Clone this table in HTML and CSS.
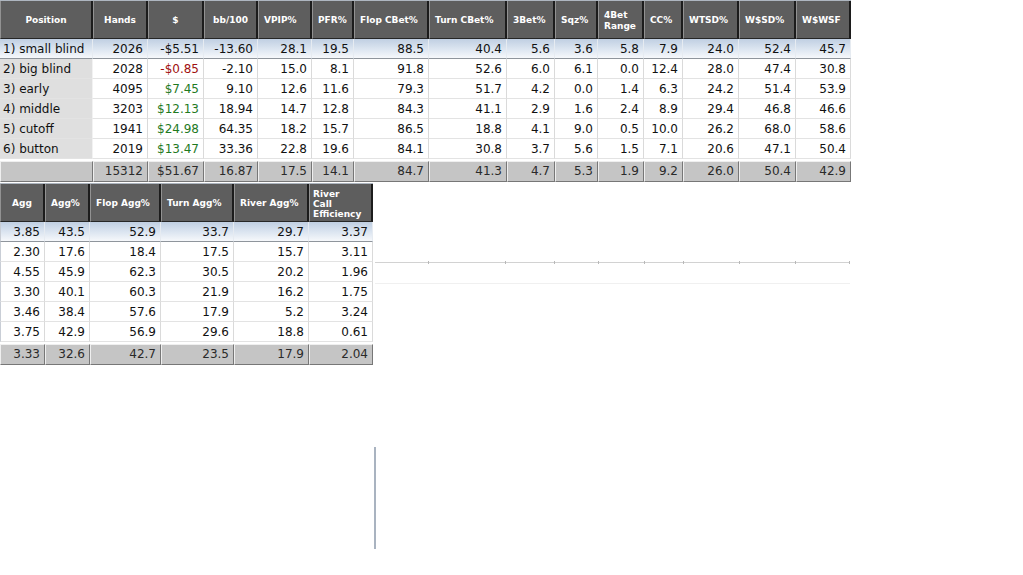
FILE: index.html
```html
<!DOCTYPE html>
<html>
<head>
<meta charset="utf-8">
<link rel="stylesheet" href="styles.css">
</head>
<body>
<div class="page">
  <div class="tbl t1">
    <div class="row head">
      <div class="h c">Position</div><div class="h c">Hands</div><div class="h c">$</div><div class="h c">bb/100</div><div class="h">VPIP%</div><div class="h">PFR%</div><div class="h">Flop CBet%</div><div class="h">Turn CBet%</div><div class="h">3Bet%</div><div class="h">Sqz%</div><div class="h">4Bet<br>Range</div><div class="h">CC%</div><div class="h">WTSD%</div><div class="h">W$SD%</div><div class="h">W$WSF</div>
    </div>
    <div class="row sel">
      <div class="d l">1) small blind</div><div class="d">2026</div><div class="d">-$5.51</div><div class="d">-13.60</div><div class="d">28.1</div><div class="d">19.5</div><div class="d">88.5</div><div class="d">40.4</div><div class="d">5.6</div><div class="d">3.6</div><div class="d">5.8</div><div class="d">7.9</div><div class="d">24.0</div><div class="d">52.4</div><div class="d">45.7</div>
    </div>
    <div class="row">
      <div class="d l pos">2) big blind</div><div class="d">2028</div><div class="d neg">-$0.85</div><div class="d">-2.10</div><div class="d">15.0</div><div class="d">8.1</div><div class="d">91.8</div><div class="d">52.6</div><div class="d">6.0</div><div class="d">6.1</div><div class="d">0.0</div><div class="d">12.4</div><div class="d">28.0</div><div class="d">47.4</div><div class="d">30.8</div>
    </div>
    <div class="row">
      <div class="d l pos">3) early</div><div class="d">4095</div><div class="d pos-m">$7.45</div><div class="d">9.10</div><div class="d">12.6</div><div class="d">11.6</div><div class="d">79.3</div><div class="d">51.7</div><div class="d">4.2</div><div class="d">0.0</div><div class="d">1.4</div><div class="d">6.3</div><div class="d">24.2</div><div class="d">51.4</div><div class="d">53.9</div>
    </div>
    <div class="row">
      <div class="d l pos">4) middle</div><div class="d">3203</div><div class="d pos-m">$12.13</div><div class="d">18.94</div><div class="d">14.7</div><div class="d">12.8</div><div class="d">84.3</div><div class="d">41.1</div><div class="d">2.9</div><div class="d">1.6</div><div class="d">2.4</div><div class="d">8.9</div><div class="d">29.4</div><div class="d">46.8</div><div class="d">46.6</div>
    </div>
    <div class="row">
      <div class="d l pos">5) cutoff</div><div class="d">1941</div><div class="d pos-m">$24.98</div><div class="d">64.35</div><div class="d">18.2</div><div class="d">15.7</div><div class="d">86.5</div><div class="d">18.8</div><div class="d">4.1</div><div class="d">9.0</div><div class="d">0.5</div><div class="d">10.0</div><div class="d">26.2</div><div class="d">68.0</div><div class="d">58.6</div>
    </div>
    <div class="row">
      <div class="d l pos">6) button</div><div class="d">2019</div><div class="d pos-m">$13.47</div><div class="d">33.36</div><div class="d">22.8</div><div class="d">19.6</div><div class="d">84.1</div><div class="d">30.8</div><div class="d">3.7</div><div class="d">5.6</div><div class="d">1.5</div><div class="d">7.1</div><div class="d">20.6</div><div class="d">47.1</div><div class="d">50.4</div>
    </div>
    <div class="row foot">
      <div class="f"></div><div class="f">15312</div><div class="f pos-m">$51.67</div><div class="f">16.87</div><div class="f">17.5</div><div class="f">14.1</div><div class="f">84.7</div><div class="f">41.3</div><div class="f">4.7</div><div class="f">5.3</div><div class="f">1.9</div><div class="f">9.2</div><div class="f">26.0</div><div class="f">50.4</div><div class="f">42.9</div>
    </div>
  </div>

  <div class="tbl t2">
    <div class="row head">
      <div class="h c">Agg</div><div class="h">Agg%</div><div class="h">Flop Agg%</div><div class="h">Turn Agg%</div><div class="h">River Agg%</div><div class="h tight">River<br>Call<br>Efficiency</div>
    </div>
    <div class="row sel">
      <div class="d first">3.85</div><div class="d">43.5</div><div class="d">52.9</div><div class="d">33.7</div><div class="d">29.7</div><div class="d">3.37</div>
    </div>
    <div class="row">
      <div class="d first">2.30</div><div class="d">17.6</div><div class="d">18.4</div><div class="d">17.5</div><div class="d">15.7</div><div class="d">3.11</div>
    </div>
    <div class="row">
      <div class="d first">4.55</div><div class="d">45.9</div><div class="d">62.3</div><div class="d">30.5</div><div class="d">20.2</div><div class="d">1.96</div>
    </div>
    <div class="row">
      <div class="d first">3.30</div><div class="d">40.1</div><div class="d">60.3</div><div class="d">21.9</div><div class="d">16.2</div><div class="d">1.75</div>
    </div>
    <div class="row">
      <div class="d first">3.46</div><div class="d">38.4</div><div class="d">57.6</div><div class="d">17.9</div><div class="d">5.2</div><div class="d">3.24</div>
    </div>
    <div class="row">
      <div class="d first">3.75</div><div class="d">42.9</div><div class="d">56.9</div><div class="d">29.6</div><div class="d">18.8</div><div class="d">0.61</div>
    </div>
    <div class="row foot">
      <div class="f">3.33</div><div class="f">32.6</div><div class="f">42.7</div><div class="f">23.5</div><div class="f">17.9</div><div class="f">2.04</div>
    </div>
  </div>

  <div class="ghost-line g1">
    <i style="left:53px"></i><i style="left:130px"></i><i style="left:179px"></i><i style="left:223px"></i><i style="left:269px"></i><i style="left:308px"></i><i style="left:364px"></i><i style="left:420px"></i><i style="left:474px"></i>
  </div>
  <div class="ghost-line g2"></div>
  <div class="ghost-v"></div>
</div>
</body>
</html>
```
FILE: styles.css
```css
html, body {
  margin: 0;
  padding: 0;
  background: #fff;
}

.page {
  position: relative;
  width: 1023px;
  height: 575px;
  font-family: "DejaVu Sans", Verdana, sans-serif;
  color: #111;
}

.tbl {
  display: flex;
  flex-direction: column;
  border-top: 1px solid #aeb6c0;
}

.t1 { width: 851px; }
.t2 { width: 373px; margin-top: 1px; }

.row {
  display: grid;
}

.t1 .row {
  grid-template-columns: 93px 55px 56px 54px 54px 42px 75px 78px 48px 43px 46px 39px 56px 57px 55px;
}

.t2 .row {
  grid-template-columns: 45px 45px 71px 73px 75px 64px;
}

.head {
  height: 38px;
}

.h {
  box-sizing: border-box;
  background: #5e5e5e;
  color: #fff;
  font-weight: bold;
  font-size: 9px;
  line-height: 11px;
  border-left: 1px solid #929292;
  border-right: 2px solid #1c1c1c;
  border-bottom: 1px solid #262626;
  display: flex;
  align-items: center;
  padding-left: 5px;
  padding-top: 2px;
  white-space: nowrap;
  overflow: hidden;
}

.h.c {
  justify-content: center;
  padding-left: 0;
}

.h.tight {
  padding-left: 3px;
  padding-top: 3px;
  line-height: 10px;
}

.row:not(.head):not(.foot) {
  height: 20px;
}

.d {
  box-sizing: border-box;
  font-size: 12px;
  line-height: 19px;
  padding-top: 1px;
  text-align: right;
  padding-right: 4px;
  border-right: 1px solid #dadada;
  border-bottom: 1px solid #e3e3e3;
  white-space: nowrap;
  overflow: hidden;
}

.d.l {
  text-align: left;
  padding-left: 3px;
  padding-right: 0;
}

.d.pos {
  background: #dfdfdf;
  border-right-color: #f2f2f2;
}

.d.first {
  border-left: 1px solid #c9ced6;
}

.sel .d {
  background: linear-gradient(#c0cfe2, #dde6f1 55%, #f6f8fb);
  border-bottom-color: #8f959c;
  border-right-color: #e6ebf1;
}

.neg { color: #a01010; }
.pos-m { color: #1f7a1f; }

.foot {
  height: 21px;
  margin-top: 2px;
}

.f {
  box-sizing: border-box;
  background: #c5c5c5;
  font-size: 12px;
  line-height: 19px;
  text-align: right;
  padding-right: 4px;
  color: #2a2a2a;
  border-top: 1px solid #efefef;
  border-left: 1px solid #efefef;
  border-right: 1px solid #777;
  border-bottom: 1px solid #777;
  white-space: nowrap;
  overflow: hidden;
}

.ghost-line {
  position: absolute;
  left: 375px;
  width: 475px;
  height: 1px;
}

.ghost-line.g1 {
  top: 262px;
  background: #d2d2d2;
}

.ghost-line.g1 i {
  position: absolute;
  top: -1px;
  width: 1px;
  height: 3px;
  background: #b8b8b8;
}

.ghost-line.g2 {
  top: 283px;
  background: #f0f0f0;
}

.ghost-v {
  position: absolute;
  left: 374px;
  top: 447px;
  width: 2px;
  height: 102px;
  background: #a9b3c0;
}
```
